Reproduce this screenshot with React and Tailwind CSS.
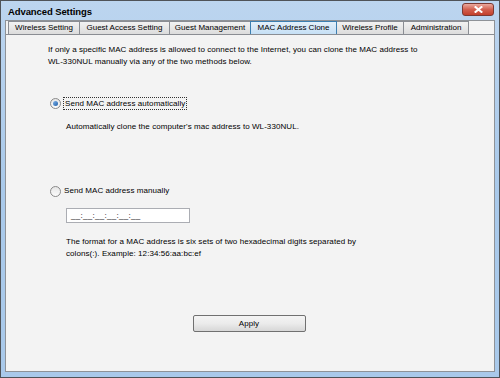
import React from "react";

const tabs = [
  { label: "Wireless Setting", w: "w-[72px]" },
  { label: "Guest Access Setting", w: "w-[91px]" },
  { label: "Guest Management", w: "w-[82px]" },
  { label: "MAC Address Clone", w: "w-[87px]", active: true },
  { label: "Wireless Profile", w: "w-[68px]" },
  { label: "Administration", w: "w-[66px]" },
];

const Radio = ({ checked }) => (
  <span className="w-[11px] h-[11px] rounded-full border border-[#8a8a8a] bg-gradient-to-b from-[#e6e6e6] to-[#fbfbfb] flex items-center justify-center shrink-0">
    {checked && (
      <span className="w-[5px] h-[5px] rounded-full bg-gradient-to-br from-[#7fb4ea] to-[#1f5fa8]" />
    )}
  </span>
);

export default function App() {
  return (
    <div
      className="w-[500px] h-[378px] flex flex-col border border-[#4f5358] bg-gradient-to-b from-[#bcd5ef] via-[#a9c9ea] to-[#a9c9ea] text-[#000]"
      style={{ fontFamily: '"Liberation Sans", Arial, sans-serif' }}
    >
      {/* title bar */}
      <div className="h-[19px] flex items-start justify-between pl-[7px] pr-[5px] shrink-0">
        <span className="text-[9.5px] font-bold leading-[19px] tracking-[-0.1px] mt-[1px]">
          Advanced Settings
        </span>
        <button className="w-[32px] h-[13px] mt-[2px] rounded-[3px] border border-[#7c3a33] bg-gradient-to-b from-[#e9a99e] via-[#d2604f] to-[#c2402c] flex items-center justify-center">
          <svg width="9" height="7" viewBox="0 0 9 7">
            <path d="M1.5 1 L7.5 6 M7.5 1 L1.5 6" stroke="#fff" strokeWidth="2" strokeLinecap="square" />
          </svg>
        </button>
      </div>

      {/* client area */}
      <div className="flex-1 mx-[4px] mb-[5px] border border-[#8e9297] bg-[#f3f3f3] flex flex-col">
        <div className="flex pl-[2px] h-[13px] shrink-0">
          {tabs.map((t) => (
            <div
              key={t.label}
              className={`${t.w} h-[13px] -mr-px flex items-center justify-center text-[8px] leading-none border border-b-0 ${
                t.active
                  ? "border-[#3c7fb1] bg-gradient-to-b from-[#e3f0fb] to-[#c5dff5] relative z-10"
                  : "border-[#8a8d93] bg-gradient-to-b from-[#f2f2f2] to-[#dcdcdc]"
              }`}
            >
              {t.label}
            </div>
          ))}
        </div>
        <div className="flex-1 border-t border-[#8a8d93] flex flex-col text-[8px] leading-[12px] tracking-[0.07px]">
          <p className="pl-[42px] pt-[9px]">
            If only a specific MAC address is allowed to connect to the Internet, you can clone the MAC address to
            <br />
            WL-330NUL manually via any of the two methods below.
          </p>

          <label className="flex items-center gap-[2px] pl-[44px] mt-[29px]">
            <Radio checked />
            <span className="border border-dotted border-[#333] px-[1px] leading-[11px]">
              Send MAC address automatically
            </span>
          </label>
          <p className="pl-[60px] mt-[11px]">
            Automatically clone the computer's mac address to WL-330NUL.
          </p>

          <label className="flex items-center gap-[3px] pl-[44px] mt-[52px]">
            <Radio />
            <span className="leading-[12px]">Send MAC address manually</span>
          </label>
          <div className="ml-[60px] mt-[11px] w-[124px] h-[15px] border border-[#abadb3] bg-white flex items-center pl-[4px] text-[8px] tracking-[0.3px]">
            __:__:__:__:__:__
          </div>
          <p className="pl-[60px] mt-[13px]">
            The format for a MAC address is six sets of two hexadecimal digits separated by
            <br />
            colons(:). Example: 12:34:56:aa:bc:ef
          </p>

          <div className="flex justify-center mt-[55px] pr-[2px]">
            <button className="w-[113px] h-[17px] rounded-[2px] border border-[#707070] bg-gradient-to-b from-[#f4f4f4] via-[#ebebeb] to-[#d7d7d7] text-[8px] leading-none">
              Apply
            </button>
          </div>
        </div>
      </div>
    </div>
  );
}
